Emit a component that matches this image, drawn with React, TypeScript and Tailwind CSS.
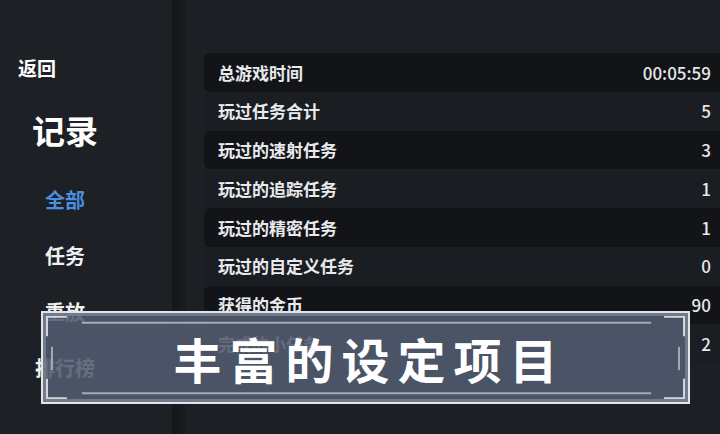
import React from 'react'

// Record screen: left nav, stat rows, and a caption banner laid over the bottom
const NAV = [
  { label: '全部', active: true },
  { label: '任务' },
  { label: '重放' },
  { label: '排行榜' },
]

const STATS: [string, string][] = [
  ['总游戏时间', '00:05:59'],
  ['玩过任务合计', '5'],
  ['玩过的速射任务', '3'],
  ['玩过的追踪任务', '1'],
  ['玩过的精密任务', '1'],
  ['玩过的自定义任务', '0'],
  ['获得的金币', '90'],
  ['完成的小任务', '2'],
]

const FONT = { fontFamily: '"Noto Sans CJK SC", "Noto Sans", sans-serif' }

// ── Banner frame ornaments (corner brackets, rules, side ticks) ─────────────
function BannerFrame() {
  const bracket = '#d3d8de'
  const rule = '#a3abb6'
  return (
    <svg className="absolute inset-0 h-full w-full" viewBox="0 0 648 92" preserveAspectRatio="none" fill="none">
      {/* corners */}
      <path d="M4 24 V4 H24" stroke={bracket} strokeWidth="2" />
      <path d="M624 4 H644 V24" stroke={bracket} strokeWidth="2" />
      <path d="M4 68 V88 H24" stroke={bracket} strokeWidth="2" />
      <path d="M624 88 H644 V68" stroke={bracket} strokeWidth="2" />
      {/* long rules */}
      <path d="M39 10 H611" stroke={rule} strokeWidth="2" />
      <path d="M39 83 H611" stroke={rule} strokeWidth="2" />
      {/* side ticks */}
      <path d="M9 35 V59" stroke={rule} strokeWidth="2" />
      <path d="M639 35 V59" stroke={rule} strokeWidth="2" />
    </svg>
  )
}

export default function App() {
  return (
    <div className="relative flex h-[434px] w-[720px] overflow-hidden bg-[#1c1f23] text-[#e8eaed]" style={FONT}>
      {/* ── Sidebar ── */}
      <aside className="w-[172px] shrink-0 bg-[#1d2024] pt-[56px]">
        <div className="pl-[18px] text-[19px] font-bold leading-[24px] text-white">返回</div>
        <div className="mt-[30px] w-[130px] text-center text-[33px] font-bold leading-[40px] text-white">记录</div>
        <nav className="mt-[22px] flex w-[130px] flex-col">
          {NAV.map((n) => (
            <div
              key={n.label}
              className={`h-[56px] text-center text-[20px] font-semibold leading-[56px] ${n.active ? 'text-[#4a8ee0]' : 'text-[#eef0f2]'}`}
            >
              {n.label}
            </div>
          ))}
        </nav>
      </aside>

      {/* divider shadow */}
      <div className="w-[14px] shrink-0 bg-gradient-to-r from-[#141619] to-[#1a1d20]" />

      {/* ── Stat rows ── */}
      <main className="flex-1 pl-[18px] pt-[53px]">
        {STATS.map(([label, value], i) => (
          <div
            key={label}
            className={`flex h-[38.75px] items-center justify-between rounded-l-[6px] pl-[14px] pr-[9px] text-[17px] ${i % 2 === 0 ? 'bg-[#121417]' : 'bg-[#1a1d21]'}`}
          >
            <span className="font-semibold">{label}</span>
            <span className="font-medium text-[#e6e8eb]">{value}</span>
          </div>
        ))}
      </main>

      {/* ── Caption banner ── */}
      <div className="absolute left-[41px] top-[311px] flex h-[93px] w-[649px] items-center justify-center border-2 border-[#e1e4e8] bg-[rgba(82,91,111,0.88)] shadow-[inset_0_0_0_3px_rgba(118,126,140,0.9)]">
        <BannerFrame />
        <span className="relative pl-[8px] text-[48px] font-bold leading-none tracking-[8px] text-white">
          丰富的设定项目
        </span>
      </div>
    </div>
  )
}
